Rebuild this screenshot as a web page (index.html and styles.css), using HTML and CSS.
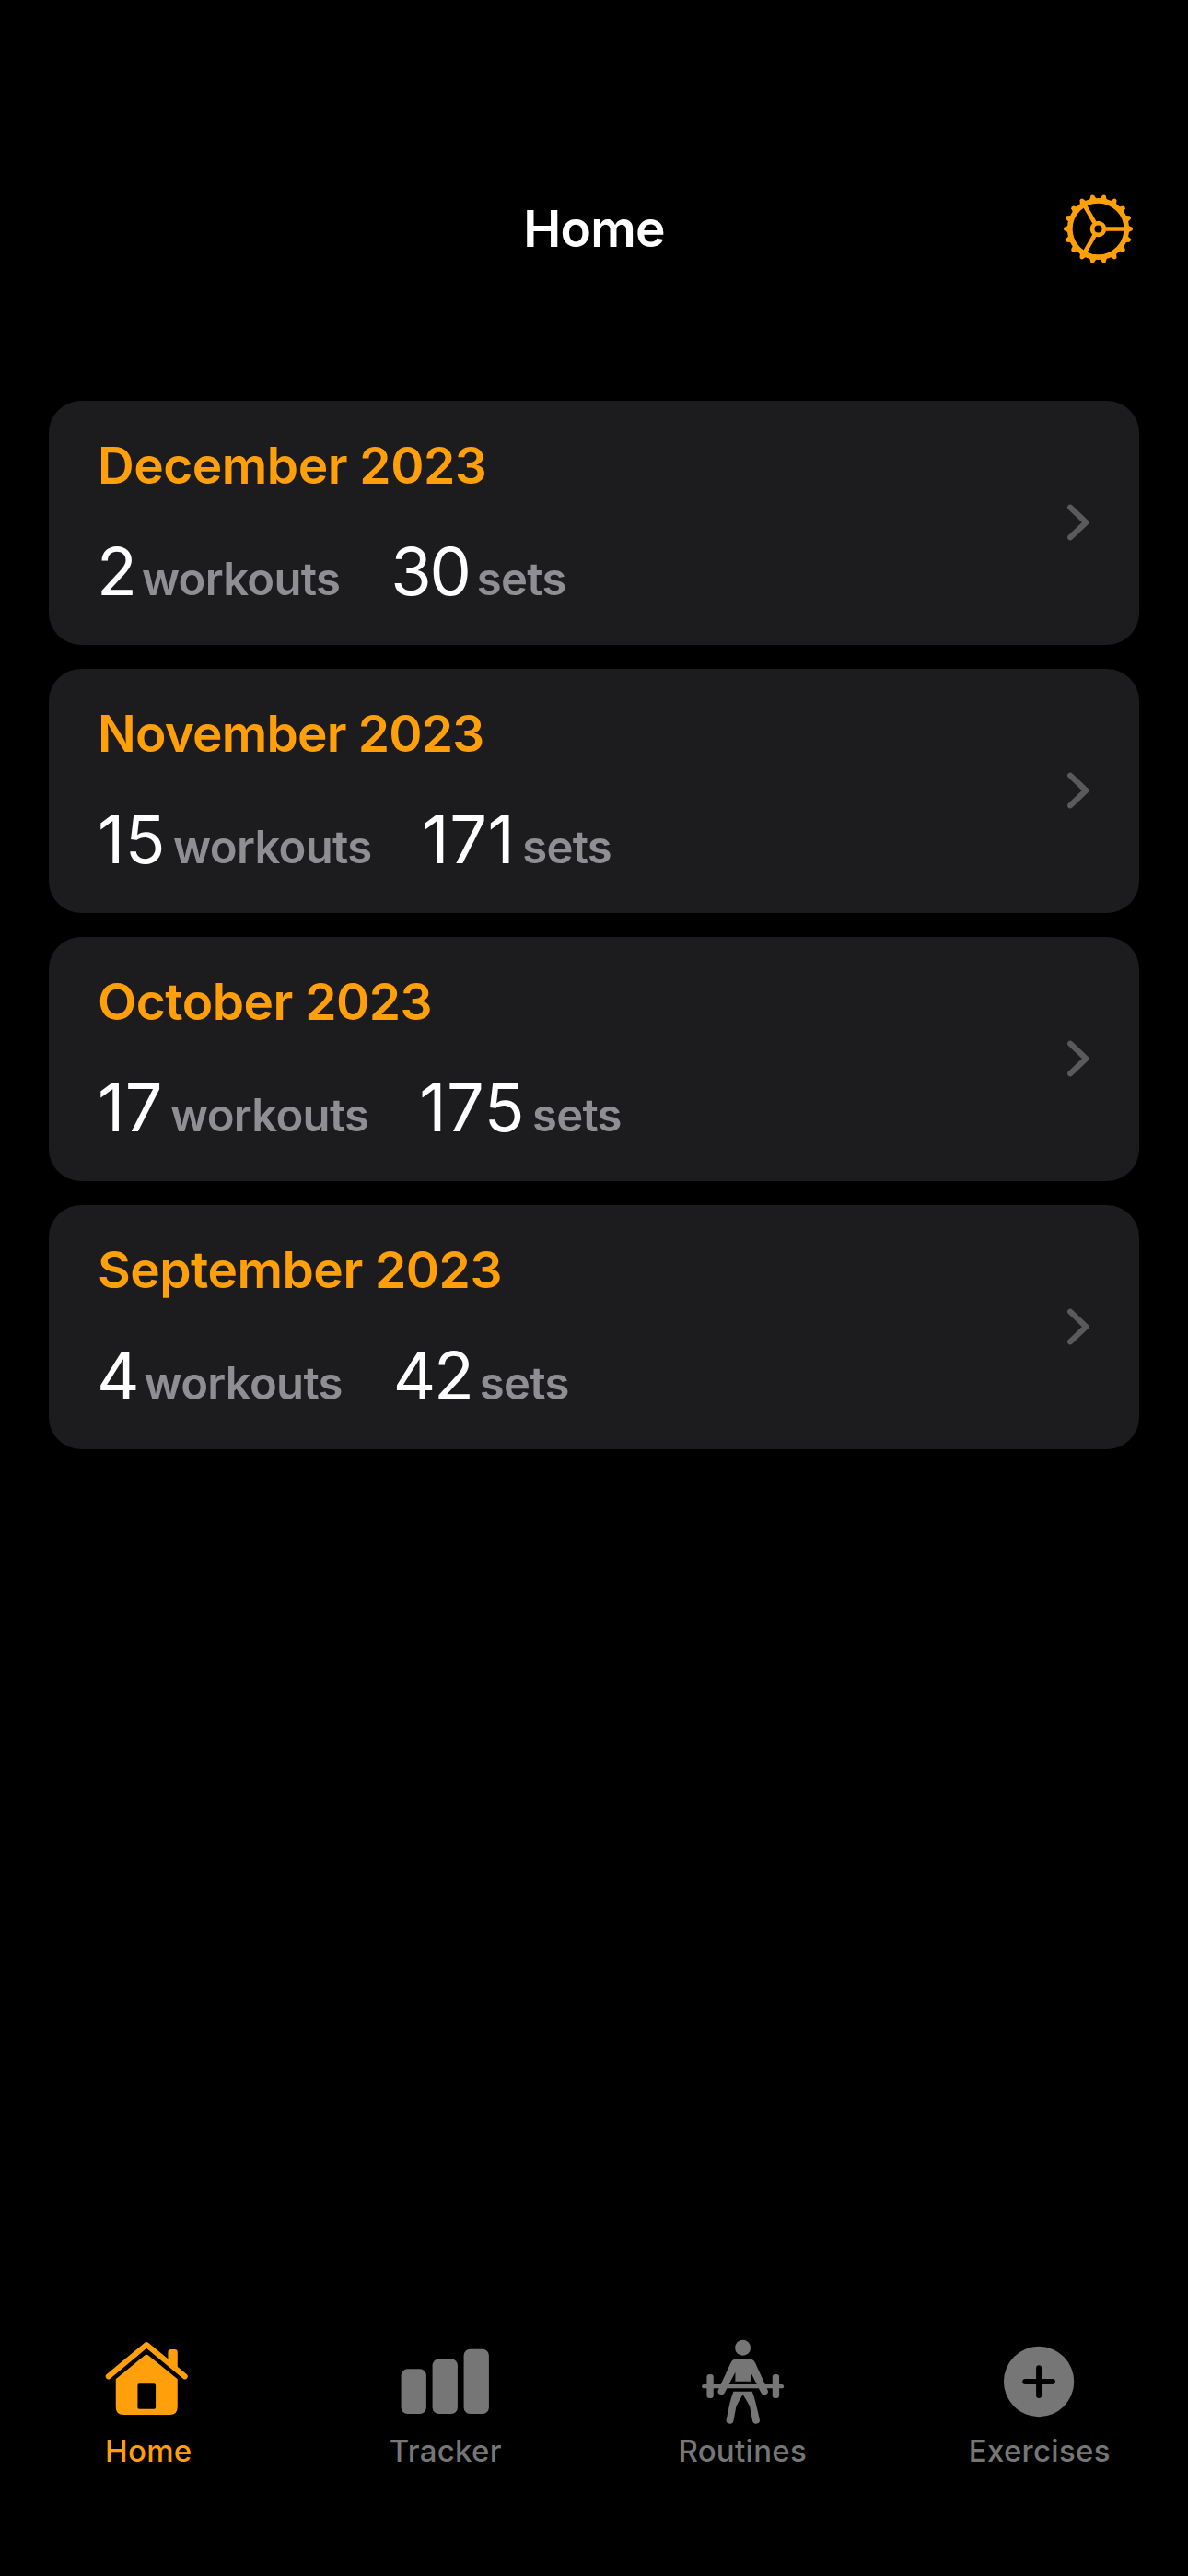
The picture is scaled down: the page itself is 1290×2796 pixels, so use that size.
FILE: index.html
```html
<!DOCTYPE html>
<html lang="en">
<head>
<meta charset="utf-8">
<title>Home</title>
<link rel="stylesheet" href="styles.css">
</head>
<body>
<header class="header">
  <h1 class="header-title">Home</h1>
  <svg class="gear" viewBox="-114 -114 228 228">
    <defs><path id="tooth" d="M90 -14 L109 -5.500 Q114 0 109 5.500 L90 14Z"/></defs>
    <g fill="none" stroke="currentColor">
      <circle r="91" stroke-width="17"/>
      <circle r="19" stroke-width="14"/>
      <path stroke-width="14" d="M24 0H90M-12 -20.8L-45 -78M-12 20.8L-45 78"/>
    </g>
    <g fill="currentColor">
      <use href="#tooth"/><use href="#tooth" transform="rotate(20)"/><use href="#tooth" transform="rotate(40)"/>
      <use href="#tooth" transform="rotate(60)"/><use href="#tooth" transform="rotate(80)"/><use href="#tooth" transform="rotate(100)"/>
      <use href="#tooth" transform="rotate(120)"/><use href="#tooth" transform="rotate(140)"/><use href="#tooth" transform="rotate(160)"/>
      <use href="#tooth" transform="rotate(180)"/><use href="#tooth" transform="rotate(200)"/><use href="#tooth" transform="rotate(220)"/>
      <use href="#tooth" transform="rotate(240)"/><use href="#tooth" transform="rotate(260)"/><use href="#tooth" transform="rotate(280)"/>
      <use href="#tooth" transform="rotate(300)"/><use href="#tooth" transform="rotate(320)"/><use href="#tooth" transform="rotate(340)"/>
    </g>
  </svg>
</header>

<main class="months">
  <section class="card">
    <div>
      <h2 class="month">December 2023</h2>
      <div class="stats">
        <p class="stat"><span class="count count-single">2</span><span class="unit">workouts</span></p>
        <p class="stat"><span class="count count-tight">30</span><span class="unit">sets</span></p>
      </div>
    </div>
    <svg class="chevron" viewBox="0 0 24 40"><path d="M3.2 3.7L20.3 20L3.2 36.3"/></svg>
  </section>
  <section class="card">
    <div>
      <h2 class="month month-tight">November 2023</h2>
      <div class="stats">
        <p class="stat"><span class="count">15</span><span class="unit">workouts</span></p>
        <p class="stat"><span class="count">171</span><span class="unit">sets</span></p>
      </div>
    </div>
    <svg class="chevron" viewBox="0 0 24 40"><path d="M3.2 3.7L20.3 20L3.2 36.3"/></svg>
  </section>
  <section class="card">
    <div>
      <h2 class="month">October 2023</h2>
      <div class="stats">
        <p class="stat"><span class="count">17</span><span class="unit">workouts</span></p>
        <p class="stat"><span class="count">175</span><span class="unit">sets</span></p>
      </div>
    </div>
    <svg class="chevron" viewBox="0 0 24 40"><path d="M3.2 3.7L20.3 20L3.2 36.3"/></svg>
  </section>
  <section class="card">
    <div>
      <h2 class="month">September 2023</h2>
      <div class="stats">
        <p class="stat"><span class="count count-single">4</span><span class="unit">workouts</span></p>
        <p class="stat"><span class="count count-tight">42</span><span class="unit">sets</span></p>
      </div>
    </div>
    <svg class="chevron" viewBox="0 0 24 40"><path d="M3.2 3.7L20.3 20L3.2 36.3"/></svg>
  </section>
</main>

<nav class="tabs">
  <a class="tab tab-active">
    <svg class="tab-icon" viewBox="3.75 45 420 300">
      <path fill="none" stroke="currentColor" stroke-width="18" stroke-linecap="round" stroke-linejoin="round" d="M84 178L208 75L333 178"/>
      <path fill="currentColor" d="M278 130V99Q278 90 287 90H300Q309 90 309 99V158Z"/>
      <path fill="currentColor" fill-rule="evenodd" d="M108 187L203 109Q208 105 213 109L309 187V278Q309 303 284 303H133Q108 303 108 278ZM184 202Q179 202 179 207V279Q179 284 184 284H233Q238 284 238 279V207Q238 202 233 202Z"/>
    </svg>
    <span class="tab-label">Home</span>
  </a>
  <a class="tab">
    <svg class="tab-icon" viewBox="11.25 45 420 300" fill="currentColor">
      <rect x="76" y="154" width="82" height="146" rx="21"/>
      <rect x="178" y="121" width="82" height="179" rx="21"/>
      <rect x="280" y="89" width="82" height="211" rx="21"/>
    </svg>
    <span class="tab-label">Tracker</span>
  </a>
  <a class="tab">
    <svg class="tab-icon" viewBox="48.75 45 420 300" fill="currentColor">
      <circle cx="260.500" cy="85" r="25.500"/>
      <path d="M243 120H278Q294 120 301 134L341 221A11 11 0 0 1 320 232L286 164V194H236V164L201 232A11 11 0 0 1 181 221L221 134Q228 120 243 120Z"/>
      <rect x="127" y="204" width="267" height="13" rx="6.500"/>
      <rect x="143" y="171" width="22" height="78" rx="9"/>
      <rect x="357" y="171" width="22" height="78" rx="9"/>
      <path d="M230 227H291Q298 245 303 266L315 317A11.500 11.500 0 0 1 292 323L283 275Q275 260 260.500 237Q247 260 239 275L230 323A11.500 11.500 0 0 1 207 317L218 266Q223 245 230 227Z"/>
    </svg>
    <span class="tab-label">Routines</span>
  </a>
  <a class="tab">
    <svg class="tab-icon" viewBox="56.25 45 420 300">
      <circle cx="263.500" cy="195" r="114.500" fill="currentColor"/>
      <path stroke="#000" stroke-width="18" stroke-linecap="round" d="M219 195H308M263.500 151V240"/>
    </svg>
    <span class="tab-label">Exercises</span>
  </a>
</nav>
</body>
</html>
```
FILE: styles.css
```css
* { box-sizing: border-box; margin: 0; padding: 0; }

body {
  height: 2796px;
  display: flex;
  flex-direction: column;
  background: #000;
  color: #fff;
  font-family: Inter, "Liberation Sans", sans-serif;
}

.header {
  display: grid;
  grid-template-columns: 1fr auto 1fr;
  align-items: center;
  height: 435px;
  padding: 209px 59px 147px;
}

.header-title {
  grid-column: 2;
  padding-bottom: 2px;
  font-size: 55px;
  line-height: 66px;
  font-weight: 600;
  letter-spacing: -0.7px;
}

.gear {
  justify-self: end;
  width: 77px;
  height: 77px;
  color: #ff9f0a;
}

.months {
  display: flex;
  flex-direction: column;
  gap: 26px;
  padding: 0 53px;
}

.card {
  display: flex;
  justify-content: space-between;
  height: 265px;
  padding: 37px 54px 0 53px;
  border-radius: 35px;
  background: #1c1c1e;
}

.month {
  margin-bottom: 40px;
  font-size: 55px;
  line-height: 66px;
  font-weight: 600;
  letter-spacing: -0.5px;
  color: #ff9f0a;
}

.month-tight { letter-spacing: -0.8px; }

.stats { display: flex; gap: 55px; }

.stat { display: flex; align-items: baseline; gap: 8px; line-height: 84px; }

.count { font-size: 72px; letter-spacing: 0.5px; }

.count-single { margin-left: -1px; letter-spacing: -3px; }

.count-tight { letter-spacing: -2.2px; }

.unit {
  font-size: 49px;
  font-weight: 600;
  letter-spacing: -0.7px;
  color: #8e8e93;
}

.chevron {
  width: 24px;
  height: 40px;
  margin-top: 75px;
  fill: none;
  stroke: #5a5a5d;
  stroke-width: 6.2px;
  stroke-linecap: round;
  stroke-linejoin: round;
}

.tabs {
  display: flex;
  margin-top: auto;
  padding-bottom: 116px;
}

.tab {
  flex: 1;
  display: flex;
  flex-direction: column;
  align-items: center;
  gap: 5px;
  color: #767676;
}

.tab-active { color: #ff9f0a; }

.tab-icon { width: 140px; height: 100px; }

.tab-label {
  font-size: 33px;
  line-height: 40px;
  font-weight: 500;
  letter-spacing: 0.3px;
}
```
